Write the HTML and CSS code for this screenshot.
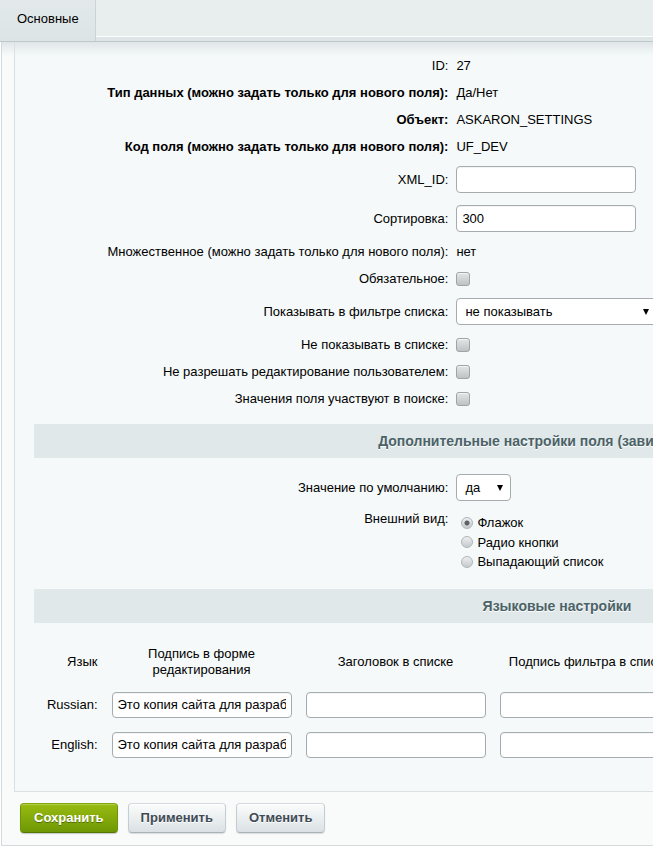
FILE: index.html
```html
<!DOCTYPE html>
<html lang="ru">
<head>
    <meta charset="UTF-8">
    <meta name="viewport" content="width=device-width, initial-scale=1.0">
    <title>Пользовательское поле UF_DEV</title>
    <link rel="stylesheet" href="styles.css">
</head>
<body>
    <div class="detail-block">
        <div class="detail-tabs">
            <span class="detail-tab detail-tab-active">Основные</span>
            <span class="detail-tabs-rest"></span>
        </div>

        <div class="detail-wrap">
            <div class="detail-content">
                <div class="detail-inner">
                    <table class="edit-table">
                        <tr>
                            <td class="cell-l">ID:</td>
                            <td class="cell-r">27</td>
                        </tr>
                        <tr>
                            <td class="cell-l"><b>Тип данных (можно задать только для нового поля):</b></td>
                            <td class="cell-r">Да/Нет</td>
                        </tr>
                        <tr>
                            <td class="cell-l"><b>Объект:</b></td>
                            <td class="cell-r">ASKARON_SETTINGS</td>
                        </tr>
                        <tr>
                            <td class="cell-l"><b>Код поля (можно задать только для нового поля):</b></td>
                            <td class="cell-r">UF_DEV</td>
                        </tr>
                        <tr>
                            <td class="cell-l">XML_ID:</td>
                            <td class="cell-r"><input class="input" type="text" value=""></td>
                        </tr>
                        <tr>
                            <td class="cell-l">Сортировка:</td>
                            <td class="cell-r"><input class="input" type="text" value="300"></td>
                        </tr>
                        <tr>
                            <td class="cell-l">Множественное (можно задать только для нового поля):</td>
                            <td class="cell-r">нет</td>
                        </tr>
                        <tr>
                            <td class="cell-l">Обязательное:</td>
                            <td class="cell-r"><input class="checkbox" type="checkbox"></td>
                        </tr>
                        <tr>
                            <td class="cell-l">Показывать в фильтре списка:</td>
                            <td class="cell-r">
                                <span class="select select-wide">
                                    <select>
                                        <option>не показывать</option>
                                        <option>простой ввод</option>
                                    </select>
                                </span>
                            </td>
                        </tr>
                        <tr>
                            <td class="cell-l">Не показывать в списке:</td>
                            <td class="cell-r"><input class="checkbox" type="checkbox"></td>
                        </tr>
                        <tr>
                            <td class="cell-l">Не разрешать редактирование пользователем:</td>
                            <td class="cell-r"><input class="checkbox" type="checkbox"></td>
                        </tr>
                        <tr>
                            <td class="cell-l">Значения поля участвуют в поиске:</td>
                            <td class="cell-r"><input class="checkbox" type="checkbox"></td>
                        </tr>
                    </table>

                    <div class="heading">Дополнительные настройки поля (зависят от типа)</div>

                    <table class="edit-table">
                        <tr>
                            <td class="cell-l">Значение по умолчанию:</td>
                            <td class="cell-r">
                                <span class="select select-short">
                                    <select>
                                        <option>да</option>
                                        <option>нет</option>
                                    </select>
                                </span>
                            </td>
                        </tr>
                        <tr>
                            <td class="cell-l cell-top">Внешний вид:</td>
                            <td class="cell-r cell-radios">
                                <label class="radio-item"><input class="radio" type="radio" name="display" checked> Флажок</label>
                                <label class="radio-item"><input class="radio" type="radio" name="display"> Радио кнопки</label>
                                <label class="radio-item"><input class="radio" type="radio" name="display"> Выпадающий список</label>
                            </td>
                        </tr>
                    </table>

                    <div class="heading">Языковые настройки</div>

                    <table class="lang-table">
                        <colgroup>
                            <col class="col-lang">
                            <col class="col-field">
                            <col class="col-field">
                            <col class="col-field">
                            <col class="col-field">
                            <col class="col-field">
                        </colgroup>
                        <tr>
                            <th class="lang-name">Язык</th>
                            <th>Подпись в форме редактирования</th>
                            <th>Заголовок в списке</th>
                            <th>Подпись фильтра в списке</th>
                            <th>Сообщение об ошибке</th>
                            <th>Помощь</th>
                        </tr>
                        <tr>
                            <td class="lang-name">Russian:</td>
                            <td><input class="input input-lang" type="text" value="Это копия сайта для разработки"></td>
                            <td><input class="input input-lang" type="text" value=""></td>
                            <td><input class="input input-lang" type="text" value=""></td>
                            <td><input class="input input-lang" type="text" value=""></td>
                            <td><input class="input input-lang" type="text" value=""></td>
                        </tr>
                        <tr>
                            <td class="lang-name">English:</td>
                            <td><input class="input input-lang" type="text" value="Это копия сайта для разработки"></td>
                            <td><input class="input input-lang" type="text" value=""></td>
                            <td><input class="input input-lang" type="text" value=""></td>
                            <td><input class="input input-lang" type="text" value=""></td>
                            <td><input class="input input-lang" type="text" value=""></td>
                        </tr>
                    </table>
                </div>
            </div>

            <div class="detail-btns">
                <button class="btn btn-save" type="submit">Сохранить</button>
                <button class="btn" type="submit">Применить</button>
                <button class="btn" type="button">Отменить</button>
            </div>
        </div>
    </div>
</body>
</html>
```

FILE: styles.css
```css
html,
body {
    margin: 0;
    padding: 0;
    overflow: hidden;
    background: #fff;
}

body {
    font-family: "Liberation Sans", Arial, sans-serif;
    font-size: 13px;
    color: #000;
}

.detail-block {
    width: 1110px;
}

/* Tabs */

.detail-tabs {
    display: flex;
    height: 41px;
    background: #dee5e7;
    border-bottom: 1px solid #bec7ca;
}

.detail-tab {
    padding: 10px 16px 0 17px;
    line-height: 17px;
    border-right: 1px solid #cbd3d5;
}

.detail-tab-active {
    background: linear-gradient(#e3e9ea, #dce4e5);
}

.detail-tabs-rest {
    flex: 1;
    height: 36px;
    background: #e8edee;
    border-bottom: 1px solid #fbfcfc;
}

/* Content */

.detail-wrap {
    margin-left: 1px;
    padding: 0 0 12px 12px;
    border-left: 1px solid #d3dbdd;
    border-bottom: 1px solid #d3dbdd;
    background: linear-gradient(#e0e6e8, #f9fbfb 14px);
}

.detail-content {
    padding: 10px 19px 26px;
    border-left: 1px solid #d9e1e3;
    border-bottom: 1px solid #d9e1e3;
    background: linear-gradient(#e0e6e8, #f5f9f9 14px);
}

.detail-inner {
    width: 1046px;
}

.edit-table {
    width: 100%;
    border-collapse: collapse;
}

.edit-table td {
    padding: 5px 4px;
    line-height: 17px;
    vertical-align: middle;
}

.cell-l {
    width: 40%;
    text-align: right;
}

.cell-r {
    text-align: left;
}

.edit-table .cell-top {
    vertical-align: top;
    padding-top: 3px;
}

.edit-table .cell-radios {
    padding-top: 6px;
}

.heading {
    margin: 12px 0 10px;
    height: 34px;
    line-height: 34px;
    background: #e0e8ea;
    text-align: center;
    font-size: 14px;
    font-weight: bold;
    color: #4b6267;
    text-shadow: 0 1px #fff;
}

/* Form controls */

.input {
    display: block;
    box-sizing: border-box;
    width: 180px;
    height: 27px;
    margin: 1px 0;
    padding: 0 5px;
    border: 1px solid #a5acaf;
    border-radius: 4px;
    background: #fff;
    box-shadow: inset 0 1px 1px rgba(0, 0, 0, 0.05);
    font-family: "Liberation Sans", Arial, sans-serif;
    font-size: 13px;
    color: #000;
    outline: none;
}

.input-lang {
    height: 26px;
    margin: 0;
}

.select {
    position: relative;
    display: block;
}

.select select {
    -webkit-appearance: none;
    appearance: none;
    display: block;
    box-sizing: border-box;
    width: 100%;
    height: 27px;
    margin: 1px 0;
    padding: 0 20px 0 8px;
    border: 1px solid #a5acaf;
    border-radius: 4px;
    background: #fff;
    font-family: "Liberation Sans", Arial, sans-serif;
    font-size: 13px;
    color: #000;
    outline: none;
}

.select::after {
    content: "";
    position: absolute;
    right: 8px;
    top: 11px;
    border-top: 6px solid #000;
    border-left: 3px solid transparent;
    border-right: 3px solid transparent;
}

.select-wide {
    width: 201px;
}

.select-short {
    width: 55px;
}

.checkbox {
    -webkit-appearance: none;
    appearance: none;
    display: block;
    box-sizing: border-box;
    width: 14px;
    height: 14px;
    margin: 2px 0 1px;
    border: 1px solid #9ea4a7;
    border-radius: 3px;
    background: linear-gradient(#e3e6e7, #bdc2c4);
    box-shadow: inset 0 1px rgba(255, 255, 255, 0.6);
}

.radio-item {
    display: flex;
    align-items: center;
    gap: 4px;
    height: 19.5px;
    margin-left: 5px;
}

.radio {
    -webkit-appearance: none;
    appearance: none;
    box-sizing: border-box;
    width: 12px;
    height: 12px;
    margin: 0;
    border: 1px solid #b1b6b9;
    border-radius: 50%;
    background: linear-gradient(#eceeef, #c6cacc);
}

.radio:checked {
    background: radial-gradient(circle, #5d6164 0, #5d6164 2px, transparent 3px),
        linear-gradient(#eceeef, #c6cacc);
}

/* Language table */

.lang-table {
    width: 1035px;
    margin: 16px auto 0;
    border-collapse: collapse;
    table-layout: fixed;
}

.col-lang {
    width: 65px;
}

.col-field {
    width: 194px;
}

.lang-table th,
.lang-table td {
    padding: 7px;
    line-height: 16px;
    font-weight: normal;
    text-align: center;
    vertical-align: middle;
}

.lang-table .lang-name {
    text-align: right;
}

/* Buttons */

.detail-btns {
    display: flex;
    gap: 10px;
    margin: 11px 0 0 6px;
}

.btn {
    height: 30px;
    padding: 0 12px;
    border: 1px solid;
    border-color: #d3dadd #c4cdd1 #a9b3b7;
    border-radius: 4px;
    background: linear-gradient(#fbfcfc, #dae1e4);
    box-shadow: 0 1px 1px rgba(0, 0, 0, 0.12), inset 0 1px #fff;
    font-family: "Liberation Sans", Arial, sans-serif;
    font-size: 13px;
    font-weight: bold;
    color: #3f4b54;
    text-shadow: 0 1px #fff;
    cursor: pointer;
}

.btn-save {
    padding: 0 13px;
    border-color: #80a60c #6c9405 #557800;
    background: linear-gradient(#99bc12, #6e9704);
    box-shadow: 0 1px 1px rgba(0, 0, 0, 0.2), inset 0 1px rgba(255, 255, 255, 0.25);
    color: #fff;
    text-shadow: 0 1px rgba(0, 0, 0, 0.35);
}
```
